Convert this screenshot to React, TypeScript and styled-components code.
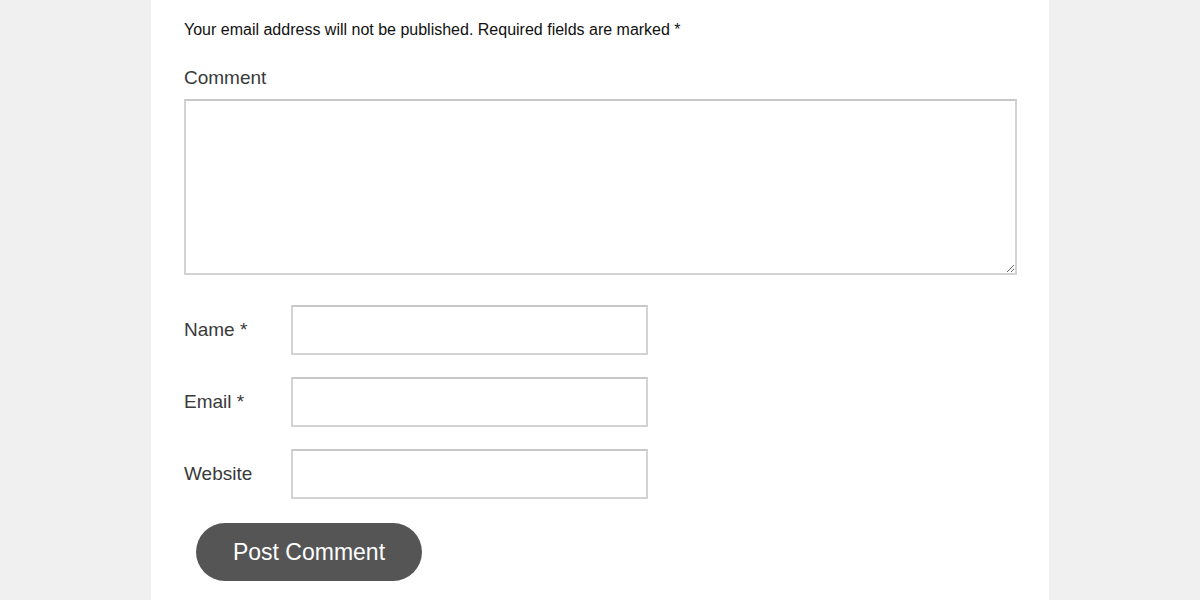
import React from "react";
import styled, { createGlobalStyle } from "styled-components";

const Global = createGlobalStyle`
  html, body { margin: 0; padding: 0; background: #f0f0f0; }
  body { font-family: "Liberation Sans", Arial, sans-serif; }
`;

const Panel = styled.div`
  width: 898px;
  min-height: 600px;
  margin: 0 auto;
  background: #ffffff;
  box-sizing: border-box;
  padding: 18px 32px 0 33px;
`;

const Notes = styled.p`
  margin: 0;
  font-size: 16px;
  line-height: 24px;
  color: #111;
`;

const Form = styled.form`
  display: flex;
  flex-direction: column;
`;

const BlockLabel = styled.label`
  display: block;
  margin-top: 24px;
  font-size: 19px;
  line-height: 24px;
  color: #3a3a3a;
`;

const TextArea = styled.textarea`
  display: block;
  margin-top: 9px;
  width: 833px;
  height: 176px;
  box-sizing: border-box;
  border: 2px solid #d3d3d3;
  border-top-color: #c8c8c8;
  background: #fff;
  resize: both;
  font-family: inherit;
  font-size: 16px;
  outline: none;
`;

const Fields = styled.div`
  display: flex;
  flex-direction: column;
  gap: 22px;
  margin-top: 30px;
`;

const Row = styled.div`
  display: flex;
  align-items: center;
`;

const RowLabel = styled.label`
  width: 107px;
  font-size: 19px;
  line-height: 24px;
  color: #3a3a3a;
`;

const Input = styled.input`
  width: 357px;
  height: 50px;
  box-sizing: border-box;
  border: 2px solid #d3d3d3;
  border-top-color: #c8c8c8;
  background: #fff;
  font-family: inherit;
  font-size: 16px;
  outline: none;
`;

const Submit = styled.button`
  margin: 24px 0 0 12px;
  align-self: flex-start;
  width: 226px;
  height: 58px;
  border: none;
  border-radius: 29px;
  background: #555555;
  color: #ffffff;
  font-family: "Liberation Sans", Arial, sans-serif;
  font-size: 23px;
  cursor: pointer;
`;

const fields = [
  { id: "author", label: "Name *" },
  { id: "email", label: "Email *" },
  { id: "url", label: "Website" },
];

export default function App() {
  return (
    <>
      <Global />
      <Panel>
        <Notes>Your email address will not be published. Required fields are marked *</Notes>
        <Form onSubmit={(e) => e.preventDefault()}>
          <BlockLabel htmlFor="comment">Comment</BlockLabel>
          <TextArea id="comment" />
          <Fields>
            {fields.map((f) => (
              <Row key={f.id}>
                <RowLabel htmlFor={f.id}>{f.label}</RowLabel>
                <Input id={f.id} type="text" />
              </Row>
            ))}
          </Fields>
          <Submit type="submit">Post Comment</Submit>
        </Form>
      </Panel>
    </>
  );
}
